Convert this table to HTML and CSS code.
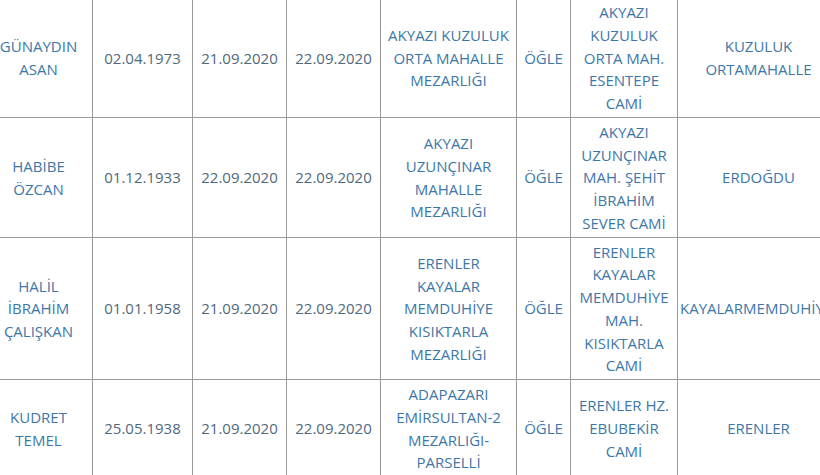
FILE: index.html
```html
<!DOCTYPE html>
<html lang="tr">
<head>
<meta charset="utf-8">
<title>Vefat listesi</title>
<link rel="stylesheet" href="styles.css">
</head>
<body>
<div class="wrap">
<table class="list">
  <colgroup>
    <col class="c1"><col class="c2"><col class="c3"><col class="c4"><col class="c5"><col class="c6"><col class="c7"><col class="c8">
  </colgroup>
  <tbody>
    <tr>
      <td>GÜNAYDIN ASAN</td>
      <td class="date">02.04.1973</td>
      <td class="date">21.09.2020</td>
      <td class="date">22.09.2020</td>
      <td>AKYAZI KUZULUK ORTA MAHALLE MEZARLIĞI</td>
      <td>ÖĞLE</td>
      <td>AKYAZI KUZULUK ORTA MAH. ESENTEPE CAMİ</td>
      <td>KUZULUK ORTAMAHALLE</td>
    </tr>
    <tr>
      <td>HABİBE ÖZCAN</td>
      <td class="date">01.12.1933</td>
      <td class="date">22.09.2020</td>
      <td class="date">22.09.2020</td>
      <td>AKYAZI UZUNÇINAR MAHALLE MEZARLIĞI</td>
      <td>ÖĞLE</td>
      <td>AKYAZI UZUNÇINAR MAH. ŞEHİT İBRAHİM SEVER CAMİ</td>
      <td>ERDOĞDU</td>
    </tr>
    <tr>
      <td>HALİL İBRAHİM ÇALIŞKAN</td>
      <td class="date">01.01.1958</td>
      <td class="date">21.09.2020</td>
      <td class="date">22.09.2020</td>
      <td>ERENLER KAYALAR MEMDUHİYE KISIKTARLA MEZARLIĞI</td>
      <td>ÖĞLE</td>
      <td>ERENLER KAYALAR MEMDUHİYE MAH. KISIKTARLA CAMİ</td>
      <td class="long">KAYALARMEMDUHİYE</td>
    </tr>
    <tr>
      <td>KUDRET TEMEL</td>
      <td class="date">25.05.1938</td>
      <td class="date">21.09.2020</td>
      <td class="date">22.09.2020</td>
      <td>ADAPAZARI EMİRSULTAN-2 MEZARLIĞI-PARSELLİ</td>
      <td>ÖĞLE</td>
      <td>ERENLER HZ. EBUBEKİR CAMİ</td>
      <td>ERENLER</td>
    </tr>
  </tbody>
</table>
</div>
</body>
</html>
```
FILE: styles.css
```css
html, body {
  margin: 0;
  padding: 0;
  background: #ffffff;
  overflow: hidden;
}
.wrap {
  margin: -3px 0 0 -16px;
}
.list {
  border-collapse: collapse;
  table-layout: fixed;
  width: 855px;
  font-family: "Open Sans", "Liberation Sans", sans-serif;
  font-size: 15px;
  line-height: 22.75px;
  color: #3d77a8;
}
.c1 { width: 108px; }
.c2 { width: 100px; }
.c3 { width: 94px; }
.c4 { width: 94px; }
.c5 { width: 136px; }
.c6 { width: 54px; }
.c7 { width: 107px; }
.c8 { width: 162px; }
.list td {
  border: 1px solid #9a9a9a;
  padding: 3px 5px 2px;
  text-align: center;
  vertical-align: middle;
}
.list td.date {
  color: #50687b;
}
.list td.long {
  text-align: left;
  padding-left: 2px;
  white-space: nowrap;
}
```
